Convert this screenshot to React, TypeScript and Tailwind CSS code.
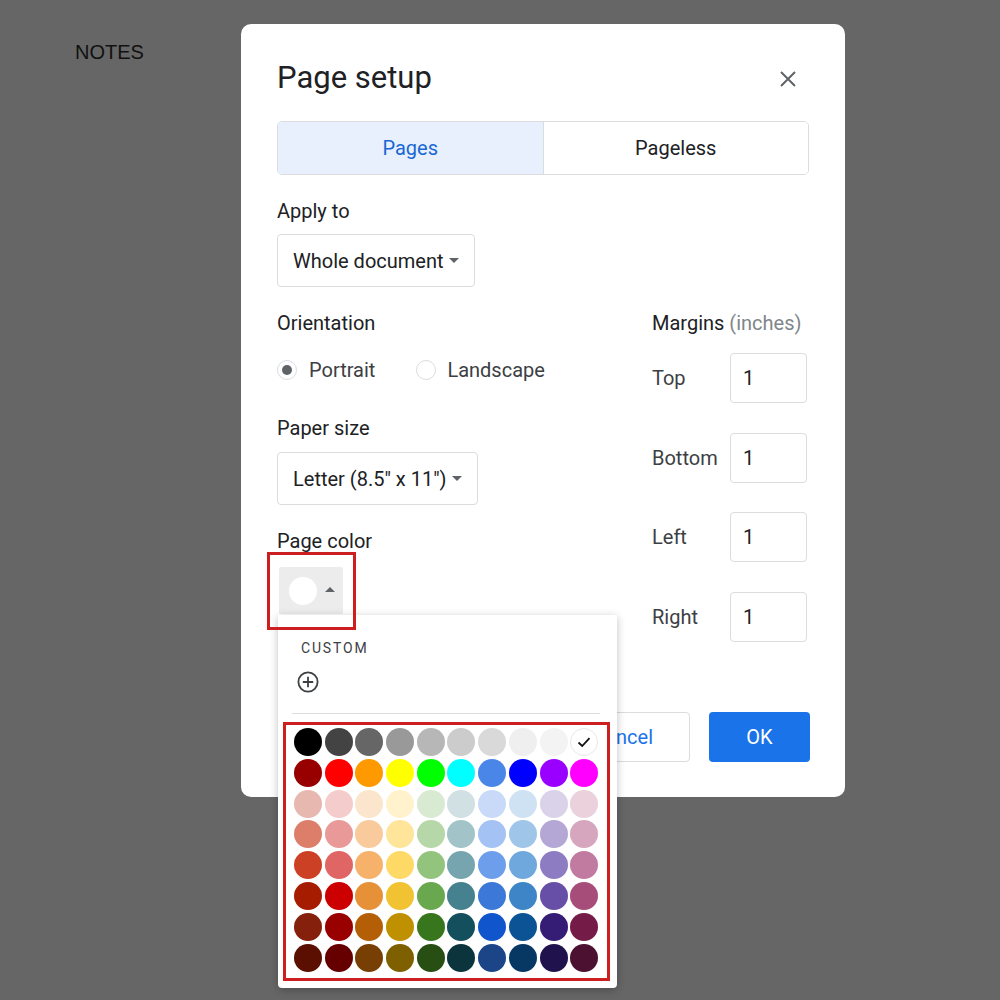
import React from "react";

const palette: string[][] = [
  ["#000000", "#434343", "#666666", "#999999", "#b7b7b7", "#cccccc", "#d9d9d9", "#efefef", "#f3f3f3", "#ffffff"],
  ["#980000", "#ff0000", "#ff9900", "#ffff00", "#00ff00", "#00ffff", "#4a86e8", "#0000ff", "#9900ff", "#ff00ff"],
  ["#e6b8af", "#f4cccc", "#fce5cd", "#fff2cc", "#d9ead3", "#d0e0e3", "#c9daf8", "#cfe2f3", "#d9d2e9", "#ead1dc"],
  ["#dd7e6b", "#ea9999", "#f9cb9c", "#ffe599", "#b6d7a8", "#a2c4c9", "#a4c2f4", "#9fc5e8", "#b4a7d6", "#d5a6bd"],
  ["#cc4125", "#e06666", "#f6b26b", "#ffd966", "#93c47d", "#76a5af", "#6d9eeb", "#6fa8dc", "#8e7cc3", "#c27ba0"],
  ["#a61c00", "#cc0000", "#e69138", "#f1c232", "#6aa84f", "#45818e", "#3c78d8", "#3d85c6", "#674ea7", "#a64d79"],
  ["#85200c", "#990000", "#b45f06", "#bf9000", "#38761d", "#134f5c", "#1155cc", "#0b5394", "#351c75", "#741b47"],
  ["#5b0f00", "#660000", "#783f04", "#7f6000", "#274e13", "#0c343d", "#1c4587", "#073763", "#20124d", "#4c1130"],
];

function DownArrow() {
  return (
    <svg width="10" height="5" viewBox="0 0 10 5">
      <path d="M0 0 L10 0 L5 5 Z" fill="#5f6368" />
    </svg>
  );
}

function UpArrow() {
  return (
    <svg width="10" height="5" viewBox="0 0 10 5">
      <path d="M0 5 L10 5 L5 0 Z" fill="#5f6368" />
    </svg>
  );
}

function Label({ children }: { children: React.ReactNode }) {
  return <div className="text-[20px] leading-[24px] text-[#202124]">{children}</div>;
}

function MarginRow({ label, first }: { label: string; first?: boolean }) {
  return (
    <div className={`flex items-center justify-between h-[50px] ${first ? "mt-[18px]" : "mt-[29.5px]"}`}>
      <span className="text-[20px] text-[#3c4043]">{label}</span>
      <div className="w-[77px] h-[50px] border border-[#dadce0] rounded-[4px] flex items-center pl-[12px] text-[20px] text-[#202124]">
        1
      </div>
    </div>
  );
}

export default function App() {
  return (
    <div className="w-[1000px] h-[1000px] bg-[#666666] relative overflow-hidden">
      <div className="pt-[40px] pl-[75px] text-[20px] leading-[24px] text-[#111111] font-['Liberation_Sans',Arial,sans-serif]">
        NOTES
      </div>

      <div className="absolute left-[241px] top-[24px] w-[604px] h-[773px] bg-white rounded-[10px] flex flex-col px-[36px] pt-[36px] pb-[35px] font-['Roboto','Noto_Sans',sans-serif]">
        {/* Header */}
        <div className="flex items-center justify-between h-[36px]">
          <div className="text-[31px] leading-[36px] text-[#202124]">Page setup</div>
          <svg width="16" height="16" viewBox="0 0 16 16" className="mr-[13px] mt-[2px]">
            <path d="M1 1 L15 15 M15 1 L1 15" stroke="#5f6368" strokeWidth="2" />
          </svg>
        </div>

        {/* Tabs */}
        <div className="mt-[25px] h-[54px] flex border border-[#dadce0] rounded-[5px] overflow-hidden">
          <div className="flex-1 bg-[#e8f0fe] flex items-center justify-center text-[20px] text-[#1967d2] border-r border-[#dadce0]">
            Pages
          </div>
          <div className="flex-1 bg-white flex items-center justify-center text-[20px] text-[#202124]">
            Pageless
          </div>
        </div>

        {/* Apply to */}
        <div className="mt-[24px]">
          <Label>Apply to</Label>
        </div>
        <div className="mt-[11px] w-[198px] h-[53px] border border-[#dadce0] rounded-[4px] flex items-center justify-between pl-[15px] pr-[15px] text-[20px] text-[#202124]">
          <span>Whole document</span>
          <DownArrow />
        </div>

        {/* Two columns */}
        <div className="mt-[24px] flex justify-between">
          <div className="flex flex-col">
            <Label>Orientation</Label>
            <div className="mt-[23px] h-[24px] flex items-center text-[20px] text-[#3c4043]">
              <div className="w-[20px] h-[20px] rounded-full border-[1.5px] border-[#dadce0] flex items-center justify-center">
                <div className="w-[10px] h-[10px] rounded-full bg-[#5f6368]" />
              </div>
              <span className="ml-[12px]">Portrait</span>
              <div className="ml-[41px] w-[20px] h-[20px] rounded-full border-[1.5px] border-[#dadce0]" />
              <span className="ml-[11px]">Landscape</span>
            </div>

            <div className="mt-[34px]">
              <Label>Paper size</Label>
            </div>
            <div className="mt-[12px] w-[201px] h-[53px] border border-[#dadce0] rounded-[4px] flex items-center justify-between pl-[15px] pr-[15px] text-[20px] text-[#202124]">
              <span>Letter (8.5" x 11")</span>
              <DownArrow />
            </div>

            <div className="mt-[24px]">
              <Label>Page color</Label>
            </div>
            <div className="mt-[14px] ml-[2px] relative w-[64px] h-[47px]">
              <div className="w-[64px] h-[47px] bg-[#ececec] rounded-[2px] flex items-center pl-[10px]">
                <div className="w-[28px] h-[28px] rounded-full bg-white" />
                <div className="ml-[8px] mb-[2px]">
                  <UpArrow />
                </div>
              </div>

              {/* red annotation around button */}
              <div className="absolute left-[-12px] top-[-15px] w-[89px] h-[78px] border-[3px] border-[#cc1f1f] z-20" />

              {/* Popup */}
              <div className="absolute left-[-1px] top-[48px] w-[339px] h-[373px] bg-white rounded-b-[4px] shadow-[0_2px_8px_rgba(0,0,0,0.25)] z-10 flex flex-col">
                <div className="pt-[23px] pl-[23px] text-[14px] leading-[20px] tracking-[0.13em] text-[#3c4043]">
                  CUSTOM
                </div>
                <div className="mt-[13px] ml-[19px]">
                  <svg width="22" height="22" viewBox="0 0 22 22">
                    <circle cx="11" cy="11" r="9.6" fill="none" stroke="#3c4043" strokeWidth="1.8" />
                    <path d="M11 5.8 V16.2 M5.8 11 H16.2" stroke="#3c4043" strokeWidth="1.8" />
                  </svg>
                </div>
                <div className="mt-[20px] ml-[14px] mr-[17px] h-px bg-[#dadce0]" />
                <div className="mt-[8px] ml-[5px] w-[327px] h-[259px] border-[3px] border-[#cc1f1f] pl-[8px] pt-[3px]">
                  <div className="grid grid-cols-[repeat(10,28px)] gap-x-[2.7px] gap-y-[2.8px]">
                    {palette.flatMap((row, ri) =>
                      row.map((c, ci) => {
                        const isWhite = ri === 0 && ci === 9;
                        return (
                          <div
                            key={`${ri}-${ci}`}
                            className={`w-[28px] h-[28px] rounded-full flex items-center justify-center ${
                              isWhite ? "border border-[#e8e8e8]" : ""
                            }`}
                            style={{ backgroundColor: c }}
                          >
                            {isWhite && (
                              <svg width="16" height="16" viewBox="0 0 16 16">
                                <path d="M2.5 8.5 L6.2 12 L13.5 4.2" fill="none" stroke="#111111" strokeWidth="1.8" />
                              </svg>
                            )}
                          </div>
                        );
                      })
                    )}
                  </div>
                </div>
              </div>
            </div>
          </div>

          <div className="w-[155px] mr-[2px] flex flex-col">
            <div className="text-[20px] leading-[24px] text-[#202124] whitespace-nowrap">
              Margins <span className="text-[#80868b]">(inches)</span>
            </div>
            <MarginRow label="Top" first />
            <MarginRow label="Bottom" />
            <MarginRow label="Left" />
            <MarginRow label="Right" />
          </div>
        </div>

        {/* Buttons */}
        <div className="mt-auto flex justify-end gap-[19px]">
          <div className="h-[50px] px-[36px] border border-[#dadce0] rounded-[4px] flex items-center text-[20px] text-[#1a73e8]">
            Cancel
          </div>
          <div className="w-[101px] h-[50px] -mr-px bg-[#1a73e8] rounded-[4px] flex items-center justify-center text-[20px] text-white">
            OK
          </div>
        </div>
      </div>
    </div>
  );
}
